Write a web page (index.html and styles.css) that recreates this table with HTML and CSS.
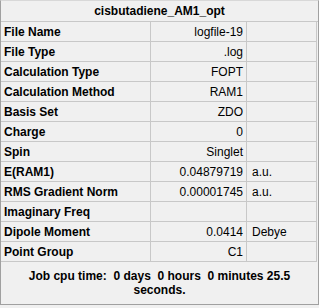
FILE: index.html
```html
<!DOCTYPE html>
<html lang="en">
<head>
    <meta charset="UTF-8">
    <title>cisbutadiene_AM1_opt</title>
    <link rel="stylesheet" href="styles.css">
</head>
<body>
    <div class="summary">
        <div class="title">cisbutadiene_AM1_opt</div>
        <table class="props">
            <tr><th>File Name</th><td class="val">logfile-19</td><td class="unit"></td></tr>
            <tr><th>File Type</th><td class="val">.log</td><td class="unit"></td></tr>
            <tr><th>Calculation Type</th><td class="val">FOPT</td><td class="unit"></td></tr>
            <tr><th>Calculation Method</th><td class="val">RAM1</td><td class="unit"></td></tr>
            <tr><th>Basis Set</th><td class="val">ZDO</td><td class="unit"></td></tr>
            <tr><th>Charge</th><td class="val">0</td><td class="unit"></td></tr>
            <tr><th>Spin</th><td class="val">Singlet</td><td class="unit"></td></tr>
            <tr><th>E(RAM1)</th><td class="val">0.04879719</td><td class="unit">a.u.</td></tr>
            <tr><th>RMS Gradient Norm</th><td class="val">0.00001745</td><td class="unit">a.u.</td></tr>
            <tr><th>Imaginary Freq</th><td class="val"></td><td class="unit"></td></tr>
            <tr><th>Dipole Moment</th><td class="val">0.0414</td><td class="unit">Debye</td></tr>
            <tr><th>Point Group</th><td class="val">C1</td><td class="unit"></td></tr>
        </table>
        <div class="footer">Job cpu time:&nbsp; 0 days&nbsp; 0 hours&nbsp; 0 minutes 25.5 seconds.</div>
    </div>
</body>
</html>
```

FILE: styles.css
```css
body {
    margin: 0;
    background-color: #f0f0f0;
    font-family: "Liberation Sans", Arial, sans-serif;
    font-size: 12px;
    color: #000;
}
.summary {
    width: 317px;
    height: 303px;
    border: 1px solid #a0a0a0;
    border-top-color: #d8d8d8;
    background-color: #f0f0f0;
}
.title {
    height: 20px;
    line-height: 20px;
    text-align: center;
    font-weight: bold;
    border-bottom: 1px solid #c8c8c8;
}
.props {
    border-collapse: collapse;
    width: 316px;
}
.props th, .props td {
    height: 19px;
    padding: 0 3px;
    border: 1px solid #c8c8c8;
    border-top: none;
    white-space: nowrap;
}
.props tr th {
    border-left: none;
}
.props th {
    width: 143px;
    text-align: left;
    font-weight: bold;
}
.props .val {
    width: 89px;
    text-align: right;
}
.props .unit {
    text-align: left;
    padding-left: 5px;
}
.footer {
    padding: 7px 20px 0;
    text-align: center;
    font-weight: bold;
    line-height: 14px;
}
```
